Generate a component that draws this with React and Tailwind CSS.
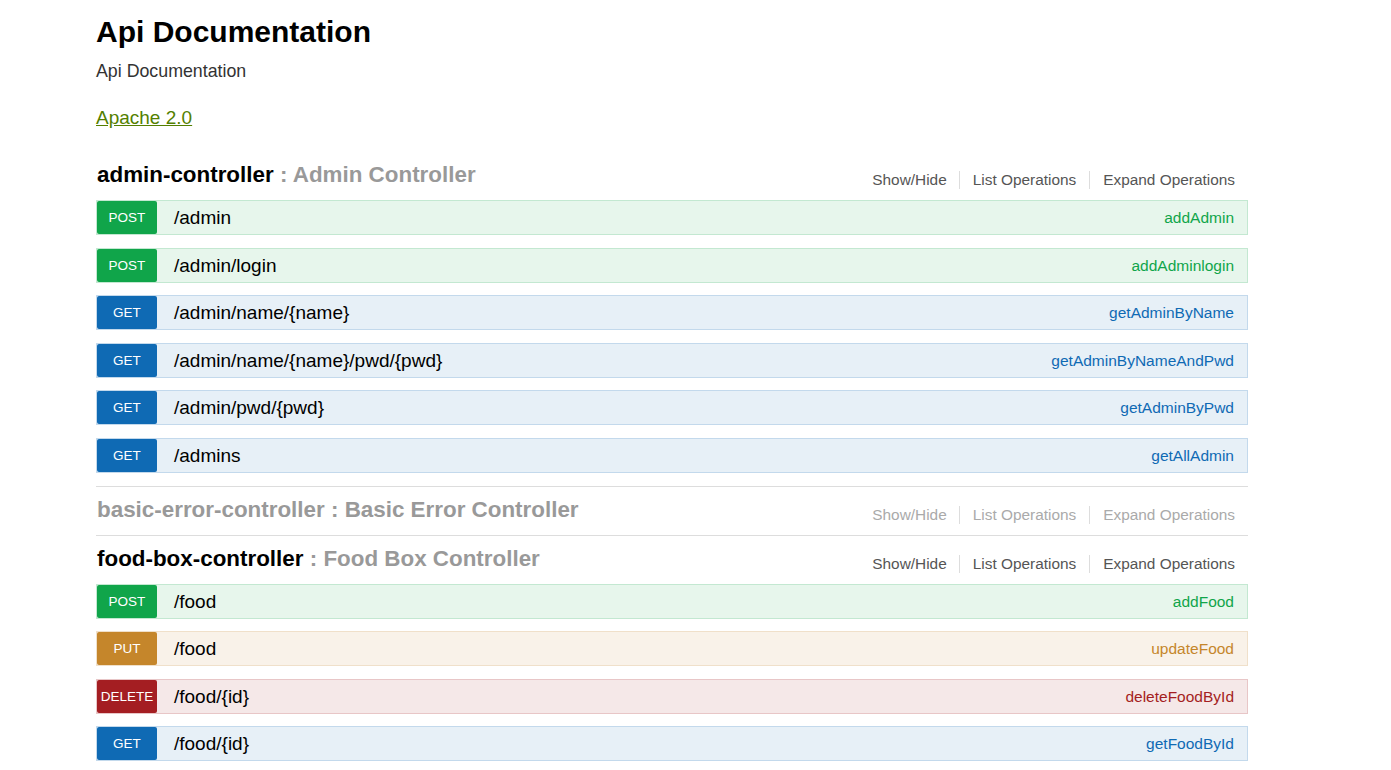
import React from "react";

const styles = {
  POST: { badge: "bg-[#10a54a]", row: "bg-[#e7f6ec] border-[#c3e8d1]", nick: "text-[#10a54a]" },
  GET: { badge: "bg-[#0f6ab4]", row: "bg-[#e7f0f7] border-[#c3d9ec]", nick: "text-[#0f6ab4]" },
  PUT: { badge: "bg-[#c5862b]", row: "bg-[#f9f2e9] border-[#f0e0ca]", nick: "text-[#c5862b]" },
  DELETE: { badge: "bg-[#a41e22]", row: "bg-[#f5e8e8] border-[#e8c6c7]", nick: "text-[#a41e22]" },
};

function Op({ method, path, nick }) {
  const s = styles[method];
  return (
    <div className={`flex h-[35px] border mb-[12.5px] ${s.row}`}>
      <div className={`w-[60px] h-[33px] rounded-[2px] text-white text-[13.5px] leading-[33px] text-center shrink-0 ${s.badge}`}>
        {method}
      </div>
      <div className="pl-[17px] text-[19px] leading-[33px] text-black flex-1">{path}</div>
      <div className={`pr-[13px] text-[15.5px] leading-[33px] ${s.nick}`}>{nick}</div>
    </div>
  );
}

function Heading({ name, desc, muted }) {
  return (
    <div className="flex h-[48px] justify-between">
      <div className={`text-[22.4px] leading-[46px] font-bold pl-[1px] ${muted ? "text-[#999]" : "text-black"}`}>
        {name} <span className="text-[#999]">: {desc}</span>
      </div>
      <div className={`flex mt-[19px] h-[18px] text-[15.4px] leading-[18px] ${muted ? "text-[#aaa]" : "text-[#555]"}`}>
        <span className="px-[12px]">Show/Hide</span>
        <span className="px-[13px] border-l border-[#ddd]">List Operations</span>
        <span className="pl-[13px] pr-[13px] border-l border-[#ddd]">Expand Operations</span>
      </div>
    </div>
  );
}

export default function App() {
  return (
    <div className="min-h-screen bg-white" style={{ fontFamily: '"Liberation Sans", Arial, sans-serif' }}>
      <div className="ml-[96px] w-[1152px]">
        <div className="pt-[14px] text-[30px] leading-[36px] font-bold text-black">Api Documentation</div>
        <div className="mt-[11px] text-[17.8px] leading-[20px] text-[#333]">Api Documentation</div>
        <div className="mt-[26px] text-[19px] leading-[22px]">
          <a href="#" className="text-[#547f00] underline">Apache 2.0</a>
        </div>
        <div className="mt-[23px]">
          <div className="border-b border-[#ddd] pb-[0.5px]">
            <Heading name="admin-controller" desc="Admin Controller" />
            <Op method="POST" path="/admin" nick="addAdmin" />
            <Op method="POST" path="/admin/login" nick="addAdminlogin" />
            <Op method="GET" path="/admin/name/{name}" nick="getAdminByName" />
            <Op method="GET" path="/admin/name/{name}/pwd/{pwd}" nick="getAdminByNameAndPwd" />
            <Op method="GET" path="/admin/pwd/{pwd}" nick="getAdminByPwd" />
            <Op method="GET" path="/admins" nick="getAllAdmin" />
          </div>
          <div className="border-b border-[#ddd]">
            <Heading name="basic-error-controller" desc="Basic Error Controller" muted />
          </div>
          <div>
            <Heading name="food-box-controller" desc="Food Box Controller" />
            <Op method="POST" path="/food" nick="addFood" />
            <Op method="PUT" path="/food" nick="updateFood" />
            <Op method="DELETE" path="/food/{id}" nick="deleteFoodById" />
            <Op method="GET" path="/food/{id}" nick="getFoodById" />
          </div>
        </div>
      </div>
    </div>
  );
}
